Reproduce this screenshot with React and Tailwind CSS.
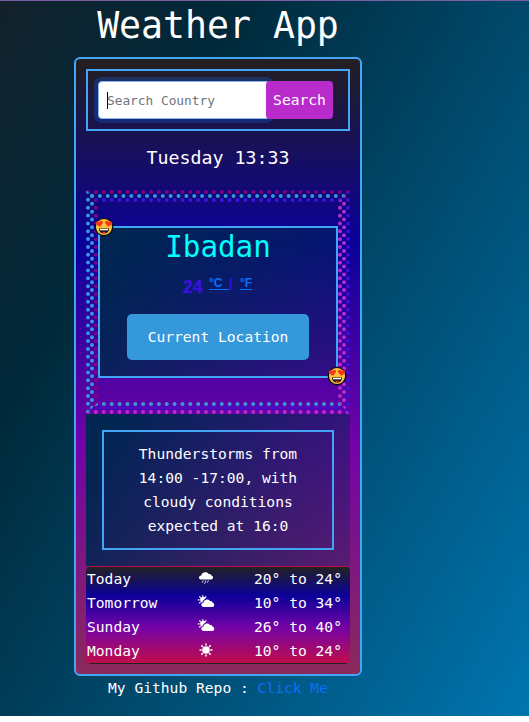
import React from "react";

function HeartEyes({ className }) {
  return (
    <svg viewBox="0 0 20 20" className={className}>
      <circle cx="10" cy="10" r="8.7" fill="#fcc23c" stroke="#0a0a14" strokeWidth="1.3" />
      <path d="M5.8 10 L1.9 7 C1.1 4.8 3.6 3.4 5.3 4.9 C6.3 3 9.3 3.6 9 6 Z" fill="#f03a17" />
      <path d="M14.2 10 L18.1 7 C18.9 4.8 16.4 3.4 14.7 4.9 C13.7 3 10.7 3.6 11 6 Z" fill="#f03a17" />
      <path d="M5 11.4 H15 C15 14.6 13 16.6 10 16.6 C7 16.6 5 14.6 5 11.4 Z" fill="#17171d" />
      <path d="M6 12 H14 V13.3 H6 Z" fill="#fff" />
      <path d="M8 15.6 C9 14.6 11 14.6 12 15.6 C11 16.3 9 16.3 8 15.6 Z" fill="#f03a17" />
    </svg>
  );
}

function Rain() {
  return (
    <svg viewBox="0 0 18 18" className="h-[18px] w-[18px]" fill="#fff">
      <path d="M4.5 9.6 C1.2 9.6 1.2 5.8 4.3 5.4 C4.8 1.6 10.4 1.2 11.8 4.2 C13.6 3.8 14.3 5 14.2 5.6 C16.9 6 16.5 9.6 14 9.6 Z" />
      <path d="M6.3 10.4 L5.2 12.8 M9 10.4 L7.5 13.8 M11.4 10.4 L10.3 12.8" stroke="#fff" strokeWidth="0.8" />
    </svg>
  );
}

function CloudSun() {
  return (
    <svg viewBox="0 0 18 18" className="h-[18px] w-[18px]" fill="#fff">
      <path d="M5.8 1.2 V2.8 M2.4 2.4 L3.6 3.7 M9.2 2.4 L8 3.7 M0.8 5.9 H2.6 M2.2 9.3 L3.5 8.2" stroke="#fff" strokeWidth="1.3" />
      <path d="M3.3 6.4 A2.7 2.7 0 0 1 8.6 4.8 C7 5.2 6.2 6.2 6 7.2 L4.6 8.6 C3.8 8.1 3.3 7.4 3.3 6.4 Z" />
      <path d="M6.8 13 C3.6 13 3.6 8.9 6.5 8.5 C6.9 4.9 12 4.5 13 7 C14.6 6.7 15.6 7.8 15.6 8.7 C18 9.2 17.8 13 15.2 13 Z" />
    </svg>
  );
}

function Sun() {
  return (
    <svg viewBox="0 0 18 18" className="h-[18px] w-[18px]">
      <circle cx="9" cy="8" r="3.8" fill="#fff" />
      <path
        d="M9 1.6 V3.6 M9 12.4 V14.4 M2.5 8 H4.7 M13.3 8 H15.5 M4.4 3.4 L5.9 4.9 M12.1 11.1 L13.6 12.6 M4.4 12.6 L5.9 11.1 M12.1 4.9 L13.6 3.4"
        stroke="#fff"
        strokeWidth="1.5"
      />
    </svg>
  );
}

const forecast = [
  ["Today", Rain, "20° to 24°"],
  ["Tomorrow", CloudSun, "10° to 34°"],
  ["Sunday", CloudSun, "26° to 40°"],
  ["Monday", Sun, "10° to 24°"],
];

export default function App() {
  return (
    <div className="h-[722px] w-[529px] overflow-hidden bg-white font-['DejaVu_Sans_Mono',monospace] text-[14.62px] leading-6 text-white">
      <div className="h-[716px] border-t border-[#7b5fa3] bg-[linear-gradient(120deg,#12212b_0%,#00293a_25%,#0075b0_100%)] pl-[74px]">
        <div className="w-[288px]">
          <h1 className="h-14 whitespace-nowrap text-center text-[36.5px] leading-[50px]">Weather App</h1>

          <main className="h-[619px] rounded-md border-2 border-[#42a5f5] bg-[linear-gradient(to_bottom,#231f20_0%,#0b0099_30%,#7303a7_63%,#8a2a5a_100%)] p-[10px]">
            <form className="flex h-[62px] border-2 border-[#42a5f5] p-[10px]" onSubmit={(e) => e.preventDefault()}>
              <div className="flex h-[38px] w-[172px] shrink-0 items-center rounded-[4px] border border-[#86b7fe] bg-white pl-2 shadow-[0_0_0_4px_rgba(13,110,253,0.25)]">
                <span className="h-[17px] w-px bg-black" />
                <span className="-ml-px whitespace-nowrap pt-px text-[12.8px] text-[#6c757d]">Search Country</span>
              </div>
              <button className="z-10 -ml-1 h-[38px] w-[67px] shrink-0 rounded-[4px] bg-[#b92bcb] text-center">Search</button>
            </form>

            <p className="h-[59px] pt-[15px] text-center text-[18.27px]">Tuesday 13:33</p>

            <div className="h-[224px] border-4 border-dotted border-b-[#b92bcb] border-l-[#3498db] border-r-[#3a10dc] border-t-[#800080]">
              <div className="h-full border-4 border-dotted border-b-[#3a10dc] border-l-[#3498db] border-r-[#b92bcb] border-t-[#3498db]">
                <div className="h-full border-4 border-dotted border-b-[#3498db] border-l-[#800080] border-r-[#b92bcb] border-t-[#3a10dc] py-6">
                  <section className="relative flex h-[152px] flex-col items-center border-2 border-[#42a5f5] bg-[linear-gradient(120deg,#002651_8%,rgba(0,38,81,0.34)_100%)]">
                    <HeartEyes className="absolute -left-[6px] -top-[11px] h-[20px] w-[20px]" />
                    <HeartEyes className="absolute -bottom-[10px] -right-[11px] h-[20px] w-[20px]" />
                    <h2 className="h-[40px] text-[29.24px] leading-[38px] text-[#00ffff]">Ibadan</h2>
                    <div className="flex h-[46px] w-[70px] font-['Liberation_Sans',sans-serif] font-bold text-[#3a10dc]">
                      <span className="w-[26px] pt-[7px] text-[17.5px] leading-6 [-webkit-text-stroke:0.4px_#3a10dc]">24</span>
                      <span className="flex whitespace-pre pt-[4px] text-[12px] leading-[22px]">
                        <a className="w-[19px] text-[#0d6efd] underline underline-offset-2">{"°C  "}</a>
                        <span className="w-[12px] pl-px">|</span>
                        <a className="text-[#0d6efd] underline underline-offset-2">°F</a>
                      </span>
                    </div>
                    <button className="h-[46px] w-[182px] rounded-[5px] bg-[#3498db]">Current Location</button>
                  </section>
                </div>
              </div>
            </div>

            <section className="h-[152px] bg-[linear-gradient(120deg,#002651_8%,rgba(0,38,81,0.3)_100%)] p-4">
              <p className="h-[120px] border-2 border-[#42a5f5] px-6 py-[10px] text-center">
                Thunderstorms from 14:00 -17:00, with cloudy conditions expected at 16:0
              </p>
            </section>

            <div className="h-[98px] rounded-[5px] border border-transparent bg-[linear-gradient(to_bottom,#222222_0%,#0b0099_30%,#7303a7_63%,#c00d4c_100%)]">
              {forecast.map(([day, Icon, range]) => (
                <div key={day} className="flex h-6 items-center whitespace-nowrap">
                  <span className="w-[110px]">{day}</span>
                  <span className="w-[57px]">
                    <Icon />
                  </span>
                  <span>{range}</span>
                </div>
              ))}
            </div>
          </main>

          <p className="whitespace-nowrap text-center">
            My Github Repo : <a className="text-[#0d6efd]">Click Me</a>
          </p>
        </div>
      </div>
    </div>
  );
}
